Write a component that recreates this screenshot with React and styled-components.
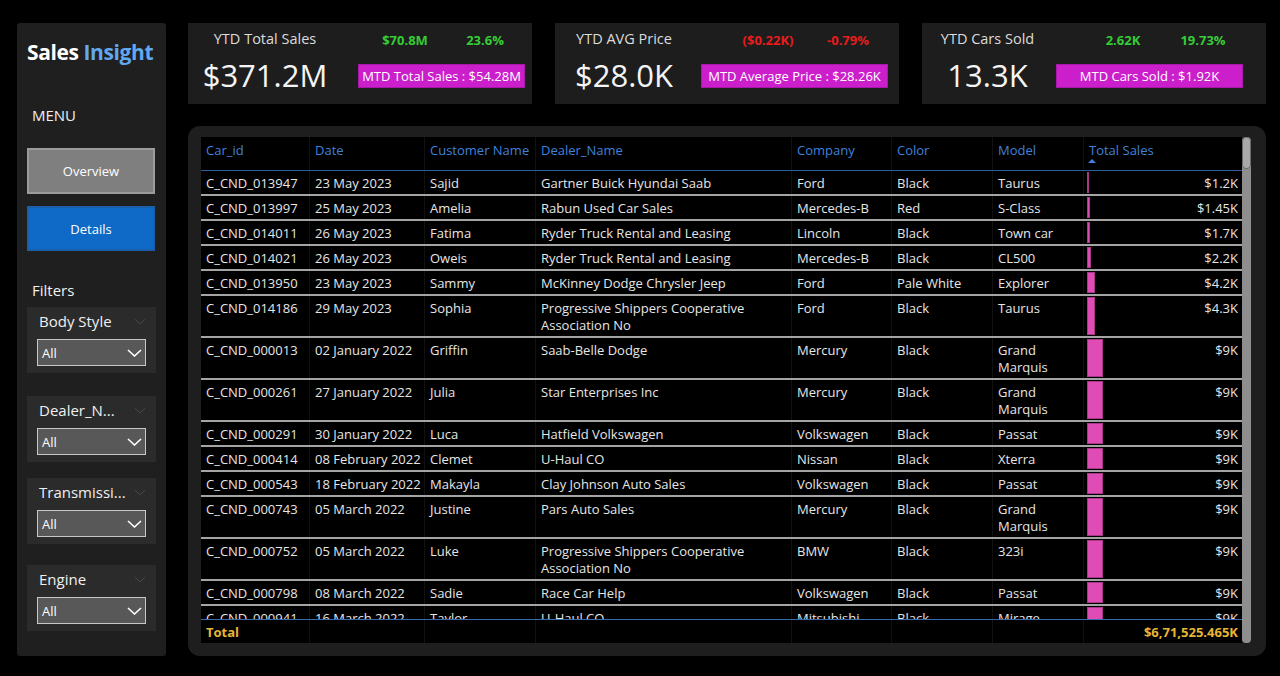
import React from "react";
import styled, { createGlobalStyle } from "styled-components";

const Global = createGlobalStyle`
  html, body { margin: 0; padding: 0; background: #000; }
  body { font-family: "Open Sans", "Noto Sans", Arial, sans-serif; color: #fff; }
  * { box-sizing: border-box; }
`;

const Page = styled.div`
  display: flex;
  gap: 22px;
  padding: 23px 14px 20px 17px;
  height: 676px;
  overflow: hidden;
`;

/* ---------- Sidebar ---------- */
const Sidebar = styled.aside`
  width: 149px;
  height: 633px;
  flex-shrink: 0;
  background: #1f1f1f;
  border-radius: 3px;
  padding: 0 10px;
  display: flex;
  flex-direction: column;
`;

const Brand = styled.h1`
  margin: 16px 0 0;
  font-size: 21px;
  font-weight: 700;
  line-height: 26px;
  letter-spacing: -0.4px;
  color: #fff;
  white-space: nowrap;
  span { color: #62a8f0; }
`;

const SectionLabel = styled.div`
  margin-top: ${(p) => p.$mt}px;
  padding-left: 5px;
  font-size: 15px;
  line-height: 20px;
  color: #f0f0f0;
`;

const NavButton = styled.button`
  margin-top: ${(p) => p.$mt}px;
  width: 128px;
  height: ${(p) => p.$h}px;
  font-family: inherit;
  font-size: 13px;
  color: #fff;
  background: ${(p) => (p.$active ? "#0f69c6" : "#7f7f7f")};
  border: 2px solid ${(p) => (p.$active ? "#1a5fa8" : "#9c9c9c")};
  cursor: pointer;
`;

const FilterCard = styled.div`
  margin-top: ${(p) => p.$mt}px;
  width: 129px;
  height: 66px;
  background: #2b2b2b;
  padding: 4px 10px 0 10px;
`;

const FilterHead = styled.div`
  display: flex;
  justify-content: space-between;
  align-items: center;
  height: 20px;
  padding-left: 2px;
  font-size: 15px;
  line-height: 20px;
  color: #f0f0f0;
  white-space: nowrap;
`;

const Dropdown = styled.div`
  margin-top: 8px;
  width: 109px;
  height: 27px;
  background: #585858;
  border: 1.5px solid #c8c8c8;
  display: flex;
  align-items: center;
  justify-content: space-between;
  padding: 0 3px 0 4px;
  font-size: 13px;
  color: #fff;
`;

const Chevron = ({ color = "#fff", w = 15, h = 8, sw = 1.6 }) => (
  <svg width={w} height={h} viewBox="0 0 15 8" fill="none">
    <polyline points="1,1 7.5,7 14,1" stroke={color} strokeWidth={sw} />
  </svg>
);

/* ---------- KPI cards ---------- */
const Main = styled.main`
  width: 1078px;
  display: flex;
  flex-direction: column;
`;

const KpiRow = styled.div`
  display: grid;
  grid-template-columns: 344px 344px 344px;
  gap: 23px;
`;

const Kpi = styled.section`
  height: 81px;
  background: #1d1d1d;
  display: flex;
  padding: 0 ${(p) => p.$pr}px 0 10px;
`;

const KpiLeft = styled.div`
  width: ${(p) => p.$w}px;
  text-align: center;
  padding-top: 6px;
`;

const KpiTitle = styled.div`
  font-size: 14.5px;
  line-height: 20px;
  color: #dcdcdc;
  white-space: nowrap;
`;

const KpiValue = styled.div`
  margin-top: 6px;
  font-size: 31px;
  line-height: 40px;
  color: #f4f4f4;
  white-space: nowrap;
`;

const KpiRight = styled.div`
  flex: 1;
  padding-top: 7px;
  display: flex;
  flex-direction: column;
`;

const Deltas = styled.div`
  display: flex;
  padding-left: ${(p) => p.$pl}px;
`;

const Delta = styled.span`
  width: 80px;
  text-align: center;
  font-size: 13px;
  line-height: 20px;
  font-weight: 700;
  color: ${(p) => (p.$neg ? "#e81c1c" : "#36cc36")};
  white-space: nowrap;
`;

const MtdBox = styled.div`
  margin-top: 14px;
  align-self: flex-end;
  width: ${(p) => p.$w}px;
  height: 24px;
  background: #cb1fcb;
  border: 1px solid #a818a8;
  font-size: 13px;
  line-height: 22px;
  text-align: center;
  color: #fff;
  white-space: nowrap;
`;

/* ---------- Table ---------- */
const COLS = "108px 115px 111px 256px 100px 101px 91px 159px";

const Panel = styled.section`
  margin-top: 22px;
  height: 530px;
  background: #1e1e1e;
  border-radius: 12px;
  padding: 11px 14px 13px 13px;
  display: flex;
`;

const Table = styled.div`
  width: 1041px;
  background: #000;
  display: flex;
  flex-direction: column;
`;

const HeaderRow = styled.div`
  display: grid;
  grid-template-columns: ${COLS};
  height: 34px;
  border-bottom: 1px solid #2d5c9e;
`;

const HeadCell = styled.div`
  position: relative;
  padding: 5px 4px 0 5px;
  border-left: ${(p) => (p.$first ? "none" : "1px solid #111")};
  font-size: 13px;
  line-height: 17px;
  color: #3f82dc;
  white-space: nowrap;
`;

const SortArrow = styled.span`
  position: absolute;
  left: 4px;
  top: 22px;
  width: 0;
  height: 0;
  border-left: 4px solid transparent;
  border-right: 4px solid transparent;
  border-bottom: 4px solid #3f82dc;
`;

const Body = styled.div`
  height: 448px;
  overflow: hidden;
`;

const Row = styled.div`
  display: grid;
  grid-template-columns: ${COLS};
  border-bottom: 2px solid #a4a4a4;
`;

const Cell = styled.div`
  padding: 4px 3px 2px 5px;
  border-left: ${(p) => (p.$first ? "none" : "1px solid #111")};
  font-size: 13px;
  line-height: 17px;
  color: #e6e6e6;
  white-space: pre;
  overflow: hidden;
`;

const SalesCell = styled.div`
  display: flex;
  padding: 1px 4px 1px 3px;
  border-left: 1px solid #111;
`;

const Bar = styled.div`
  background: #e04cb6;
  border: 0.5px solid #a83888;
  flex-shrink: 0;
`;

const Amount = styled.div`
  flex: 1;
  text-align: right;
  padding-top: 3px;
  font-size: 13px;
  line-height: 17px;
  color: #e6e6e6;
`;

const TotalRow = styled.div`
  display: grid;
  grid-template-columns: ${COLS};
  height: 24px;
  border-top: 1px solid #3a69ad;
  background: #000;
`;

const TotalCell = styled.div`
  padding: 4px ${(p) => (p.$right ? 4 : 5)}px 0 5px;
  border-left: ${(p) => (p.$first ? "none" : "1px solid #111")};
  font-size: 13px;
  line-height: 17px;
  font-weight: 700;
  color: #e6b636;
  text-align: ${(p) => (p.$right ? "right" : "left")};
  white-space: nowrap;
`;

const Scroll = styled.div`
  width: 9px;
  background: #8e8e8e;
  border-radius: 4px;
  overflow: hidden;
`;

const Thumb = styled.div`
  height: 32px;
  background: #a9a9a9;
  border: 1px solid #6a6a6a;
  border-radius: 4px;
`;

const rows = [
  ["C_CND_013947", "23 May 2023", "Sajid", "Gartner Buick Hyundai Saab", "Ford", "Black", "Taurus", 1.2, "$1.2K"],
  ["C_CND_013997", "25 May 2023", "Amelia", "Rabun Used Car Sales", "Mercedes-B", "Red", "S-Class", 1.45, "$1.45K"],
  ["C_CND_014011", "26 May 2023", "Fatima", "Ryder Truck Rental and Leasing", "Lincoln", "Black", "Town car", 1.7, "$1.7K"],
  ["C_CND_014021", "26 May 2023", "Oweis", "Ryder Truck Rental and Leasing", "Mercedes-B", "Black", "CL500", 2.2, "$2.2K"],
  ["C_CND_013950", "23 May 2023", "Sammy", "McKinney Dodge Chrysler Jeep", "Ford", "Pale White", "Explorer", 4.2, "$4.2K"],
  ["C_CND_014186", "29 May 2023", "Sophia", "Progressive Shippers Cooperative\nAssociation No", "Ford", "Black", "Taurus", 4.3, "$4.3K"],
  ["C_CND_000013", "02 January 2022", "Griffin", "Saab-Belle Dodge", "Mercury", "Black", "Grand\nMarquis", 9, "$9K"],
  ["C_CND_000261", "27 January 2022", "Julia", "Star Enterprises Inc", "Mercury", "Black", "Grand\nMarquis", 9, "$9K"],
  ["C_CND_000291", "30 January 2022", "Luca", "Hatfield Volkswagen", "Volkswagen", "Black", "Passat", 9, "$9K"],
  ["C_CND_000414", "08 February 2022", "Clemet", "U-Haul CO", "Nissan", "Black", "Xterra", 9, "$9K"],
  ["C_CND_000543", "18 February 2022", "Makayla", "Clay Johnson Auto Sales", "Volkswagen", "Black", "Passat", 9, "$9K"],
  ["C_CND_000743", "05 March 2022", "Justine", "Pars Auto Sales", "Mercury", "Black", "Grand\nMarquis", 9, "$9K"],
  ["C_CND_000752", "05 March 2022", "Luke", "Progressive Shippers Cooperative\nAssociation No", "BMW", "Black", "323i", 9, "$9K"],
  ["C_CND_000798", "08 March 2022", "Sadie", "Race Car Help", "Volkswagen", "Black", "Passat", 9, "$9K"],
  ["C_CND_000941", "16 March 2022", "Taylor", "U-Haul CO", "Mitsubishi", "Black", "Mirage", 9, "$9K"],
];

const headers = ["Car_id", "Date", "Customer Name", "Dealer_Name", "Company", "Color", "Model", "Total Sales"];

const kpis = [
  { title: "YTD Total Sales", value: "$371.2M", d1: "$70.8M", d2: "23.6%", neg: false, mtd: "MTD Total Sales : $54.28M", lw: 138, pr: 7, boxW: 167, pl: 33 },
  { title: "YTD AVG Price", value: "$28.0K", d1: "($0.22K)", d2: "-0.79%", neg: true, mtd: "MTD Average Price : $28.26K", lw: 122, pr: 11, boxW: 187, pl: 45 },
  { title: "YTD Cars Sold", value: "13.3K", d1: "2.62K", d2: "19.73%", neg: false, mtd: "MTD Cars Sold : $1.92K", lw: 116, pr: 23, boxW: 187, pl: 40 },
];

const filters = [
  { name: "Body Style", mt: 7 },
  { name: "Dealer_N...", mt: 23 },
  { name: "Transmissi...", mt: 16 },
  { name: "Engine", mt: 21 },
];

export default function App() {
  return (
    <>
      <Global />
      <Page>
        <Sidebar>
          <Brand>
            Sales <span>Insight</span>
          </Brand>
          <SectionLabel $mt={40}>MENU</SectionLabel>
          <NavButton $mt={23} $h={46}>Overview</NavButton>
          <NavButton $mt={12} $h={45} $active>Details</NavButton>
          <SectionLabel $mt={29}>Filters</SectionLabel>
          {filters.map((f) => (
            <FilterCard key={f.name} $mt={f.mt}>
              <FilterHead>
                <span>{f.name}</span>
                <Chevron color="#4a4a4a" w={12} h={7} sw={1.2} />
              </FilterHead>
              <Dropdown>
                <span>All</span>
                <Chevron />
              </Dropdown>
            </FilterCard>
          ))}
        </Sidebar>

        <Main>
          <KpiRow>
            {kpis.map((k) => (
              <Kpi key={k.title} $pr={k.pr}>
                <KpiLeft $w={k.lw}>
                  <KpiTitle>{k.title}</KpiTitle>
                  <KpiValue>{k.value}</KpiValue>
                </KpiLeft>
                <KpiRight>
                  <Deltas $pl={k.pl}>
                    <Delta $neg={k.neg}>{k.d1}</Delta>
                    <Delta $neg={k.neg}>{k.d2}</Delta>
                  </Deltas>
                  <MtdBox $w={k.boxW}>{k.mtd}</MtdBox>
                </KpiRight>
              </Kpi>
            ))}
          </KpiRow>

          <Panel>
            <Table>
              <HeaderRow>
                {headers.map((h, i) => (
                  <HeadCell key={h} $first={i === 0}>
                    {h}
                    {i === headers.length - 1 && <SortArrow />}
                  </HeadCell>
                ))}
              </HeaderRow>
              <Body>
                {rows.map((r) => (
                  <Row key={r[0]}>
                    {r.slice(0, 7).map((c, i) => (
                      <Cell key={i} $first={i === 0}>{c}</Cell>
                    ))}
                    <SalesCell>
                      <Bar style={{ width: `${Math.max(2, r[7] * 1.8)}px` }} />
                      <Amount>{r[8]}</Amount>
                    </SalesCell>
                  </Row>
                ))}
              </Body>
              <TotalRow>
                <TotalCell $first>Total</TotalCell>
                <TotalCell />
                <TotalCell />
                <TotalCell />
                <TotalCell />
                <TotalCell />
                <TotalCell />
                <TotalCell $right>$6,71,525.465K</TotalCell>
              </TotalRow>
            </Table>
            <Scroll>
              <Thumb />
            </Scroll>
          </Panel>
        </Main>
      </Page>
    </>
  );
}
